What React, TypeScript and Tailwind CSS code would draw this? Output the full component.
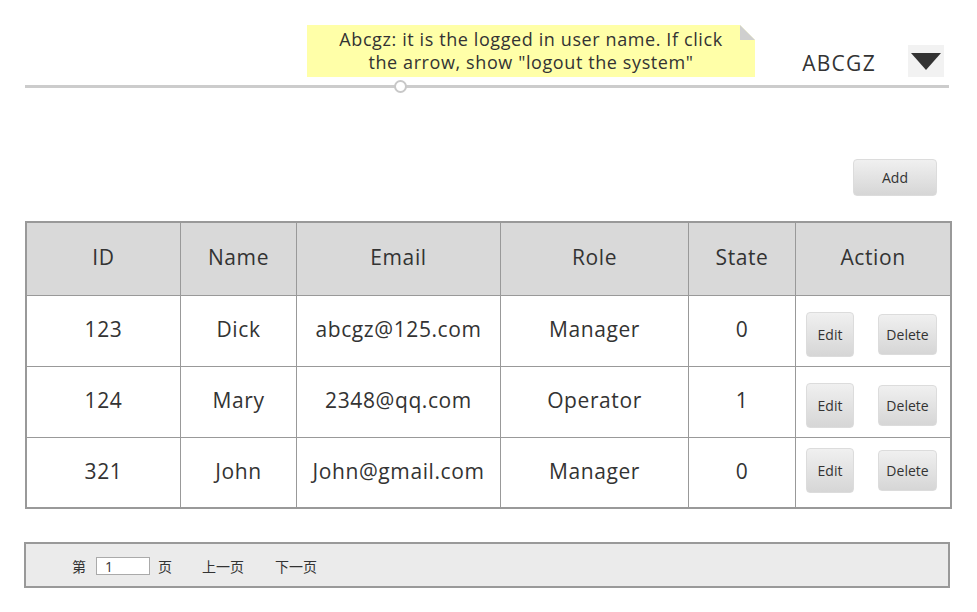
import React from "react";

const rows = [
  { id: "123", name: "Dick", email: "abcgz@125.com", role: "Manager", state: "0" },
  { id: "124", name: "Mary", email: "2348@qq.com", role: "Operator", state: "1" },
  { id: "321", name: "John", email: "John@gmail.com", role: "Manager", state: "0" },
];

const cols = ["w-[154px]", "w-[116px]", "w-[204px]", "w-[188px]", "w-[107px]"];

function Btn({ label, cls }: { label: string; cls: string }) {
  return (
    <div
      className={`flex items-center justify-center rounded-[4px] border border-[#dcdcdc] bg-gradient-to-b from-[#f0f0f0] to-[#d6d6d6] text-[14px] text-[#333] ${cls}`}
    >
      {label}
    </div>
  );
}

export default function App() {
  return (
    <div
      className="relative w-[977px] h-[612px] bg-white text-[#333]"
      style={{ fontFamily: '"Open Sans", "Noto Sans CJK SC", sans-serif' }}
    >
      {/* Header */}
      <div className="relative h-[89px]">
        <div className="flex items-start justify-end pt-[45px] pr-[33px]">
          <div className="mr-[32px] mt-[4px] text-[21px] leading-[28px] tracking-[1.3px] text-[#333]">ABCGZ</div>
          <div className="flex h-[32px] w-[36px] items-center justify-center bg-[#f2f2f2]">
            <svg width="30" height="17" viewBox="0 0 30 17">
              <polygon points="0,0 30,0 15,17" fill="#333" />
            </svg>
          </div>
        </div>
        <div className="absolute left-[25px] top-[85px] h-[3px] w-[924px] bg-[#cccccc]" />
        <div className="absolute left-[394px] top-[80px] h-[13px] w-[13px] rounded-full border-2 border-[#c8c8c8] bg-white" />
        {/* sticky note */}
        <div className="absolute left-[307px] top-[25px] flex h-[52px] w-[448px] items-center justify-center bg-[#ffffa8] text-center text-[18px] leading-[23px] tracking-[0.6px] text-[#333]">
          <div>
            Abcgz: it is the logged in user name. If click
            <br />
            the arrow, show "logout the system"
          </div>
          <svg className="absolute right-0 top-0" width="15" height="15" viewBox="0 0 15 15">
            <polygon points="0,0 15,0 15,15" fill="#ffffff" />
            <polygon points="0,0 0,15 15,15" fill="#cfcfcf" />
          </svg>
        </div>
      </div>

      {/* Add button */}
      <div className="flex justify-end pr-[40px] pt-[70px]">
        <Btn label="Add" cls="h-[37px] w-[84px]" />
      </div>

      {/* Table */}
      <div className="ml-[25px] mt-[25px] w-[927px] border-2 border-[#999] text-[21px] tracking-[0.6px]">
        <div className="flex h-[72px] bg-[#d9d9d9]">
          {["ID", "Name", "Email", "Role", "State"].map((h, i) => (
            <div key={h} className={`${cols[i]} flex shrink-0 items-center justify-center border-r border-[#999] pb-[2px]`}>
              {h}
            </div>
          ))}
          <div className="flex flex-1 items-center justify-center pb-[2px]">Action</div>
        </div>
        {rows.map((r, ri) => (
          <div key={r.id} className={`flex ${ri === 2 ? "h-[70px]" : "h-[71px]"} border-t border-[#999]`}>
            {[r.id, r.name, r.email, r.role, r.state].map((v, i) => (
              <div key={i} className={`${cols[i]} flex shrink-0 items-center justify-center border-r border-[#999] pb-[2px]`}>
                {v}
              </div>
            ))}
            <div className={`flex flex-1 items-center pl-[10px] tracking-normal ${ri === 2 ? "pb-[4px]" : "pt-[7px]"}`}>
              <Btn label="Edit" cls="h-[45px] w-[48px]" />
              <Btn label="Delete" cls="ml-[24px] h-[41px] w-[59px]" />
            </div>
          </div>
        ))}
      </div>

      {/* Pagination */}
      <div className="ml-[24px] mt-[33px] flex h-[46px] w-[926px] items-center border-2 border-[#999] bg-[#ebebeb] pl-[46px] pt-[2px] text-[14px] text-[#333]">
        <span>第</span>
        <div className="ml-[10px] flex h-[18px] w-[54px] items-center border border-[#aaa] bg-white pl-[8px] text-[14px]">1</div>
        <span className="ml-[8px]">页</span>
        <span className="ml-[30px]">上一页</span>
        <span className="ml-[31px]">下一页</span>
      </div>
    </div>
  );
}
